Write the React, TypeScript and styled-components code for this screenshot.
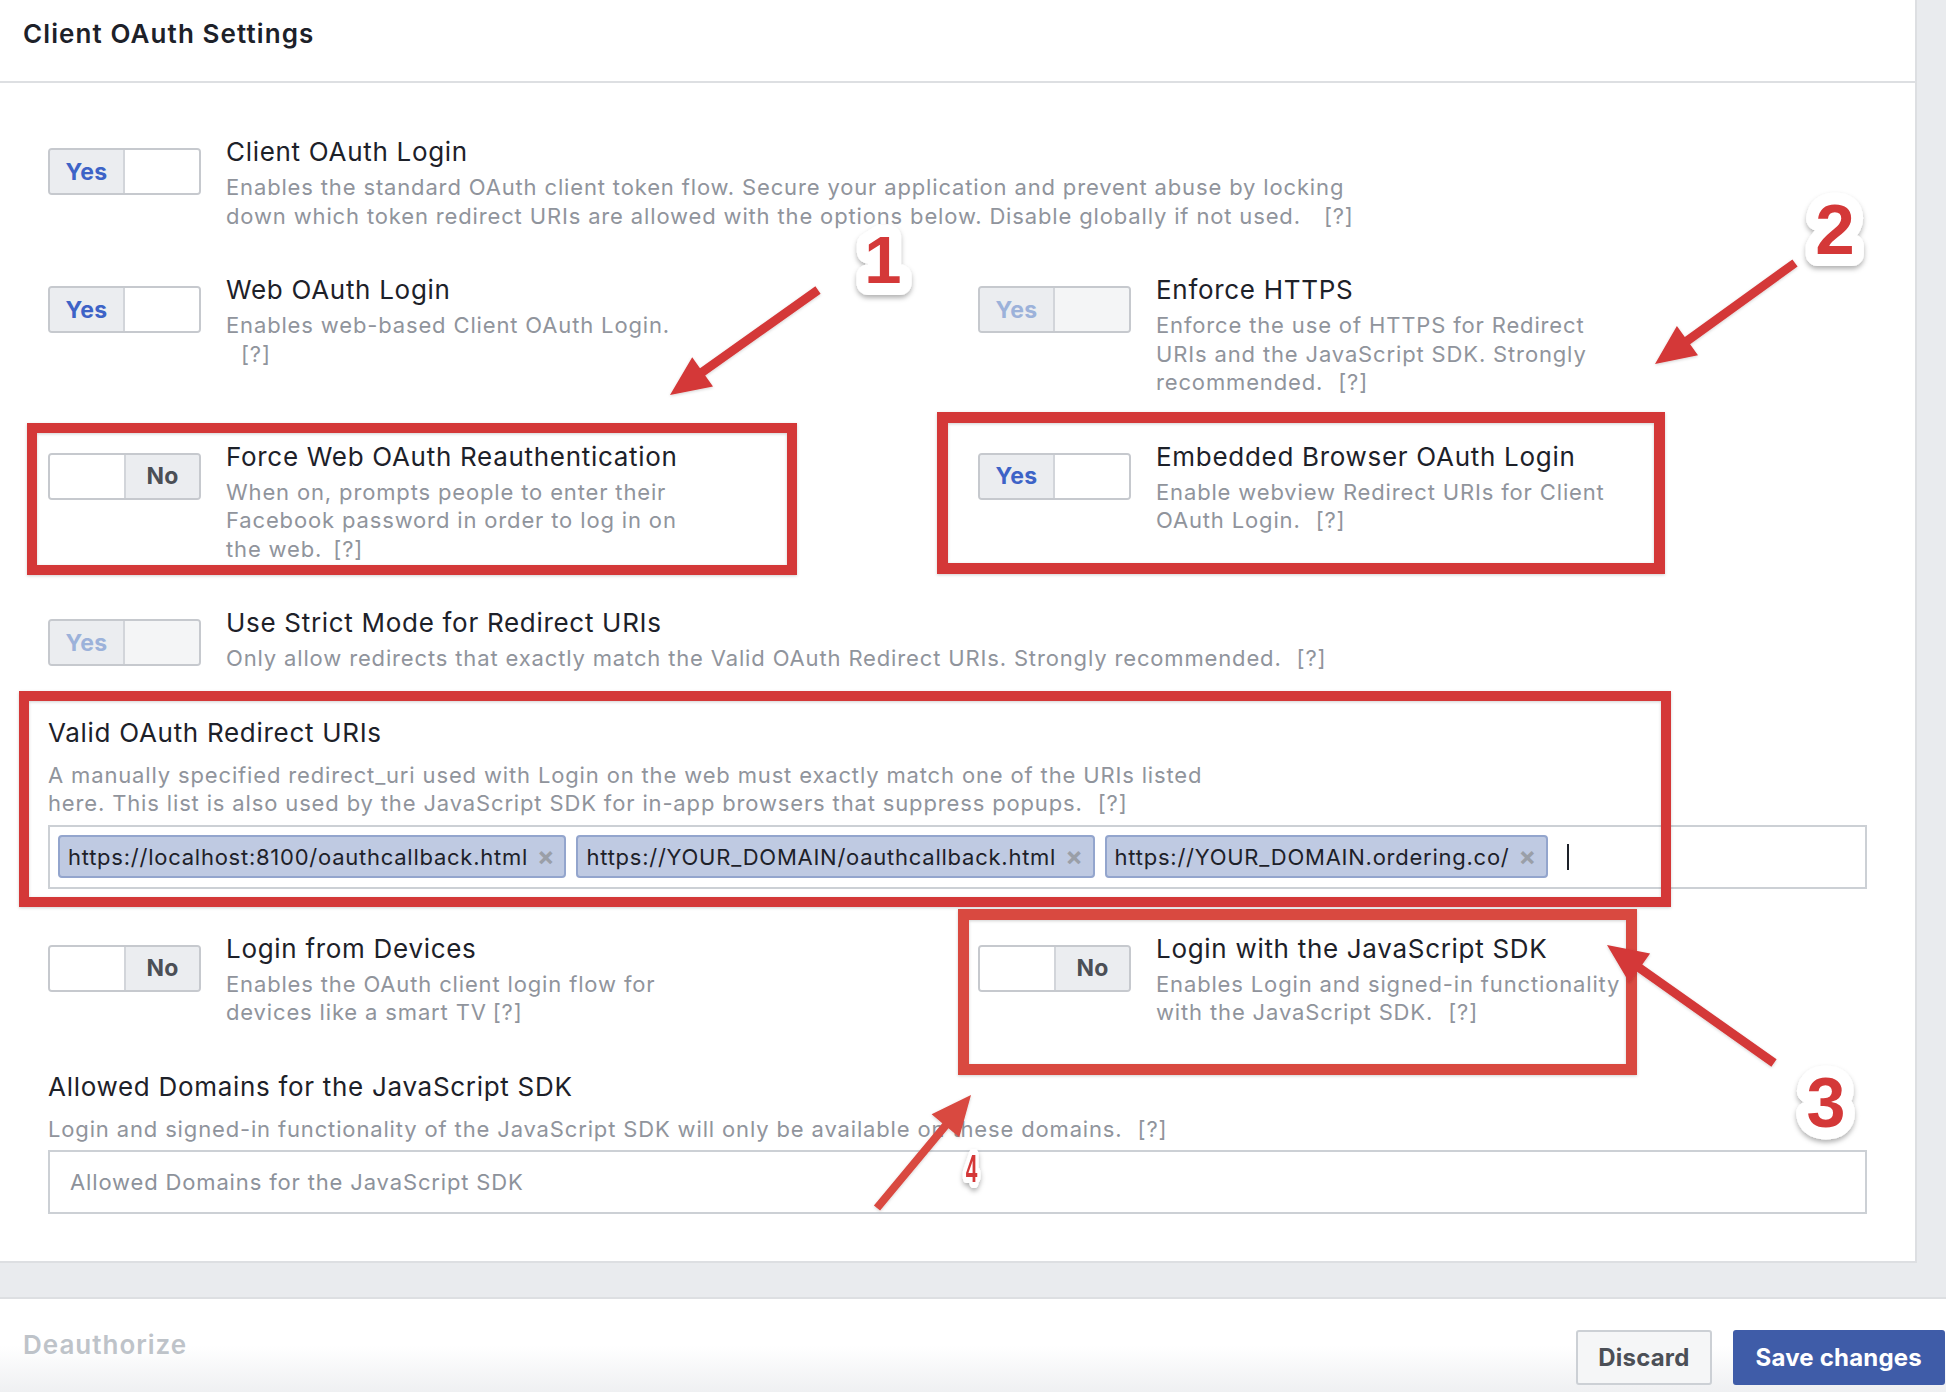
import React from 'react';
import styled, { createGlobalStyle } from 'styled-components';

const GlobalStyle = createGlobalStyle`
  html, body { margin: 0; padding: 0; }
  body {
    background: #e9ebee;
    font-family: Inter, "Noto Sans", "Liberation Sans", sans-serif;
    letter-spacing: 0.8px;
    -webkit-font-smoothing: antialiased;
  }
  * { box-sizing: border-box; }
`;

const Page = styled.div`
  position: relative;
  width: 1946px;
  height: 1392px;
  overflow: hidden;
  display: flex;
  flex-direction: column;
  background: #e9ebee;
`;

const Panel = styled.section`
  width: 1917px;
  background: #fff;
  border-right: 2px solid #dddfe2;
  border-bottom: 2px solid #dddfe2;
`;

const Header = styled.header`
  height: 83px;
  padding: 18px 23px 0;
  border-bottom: 2px solid #dddfe2;
`;

const HeaderTitle = styled.h2`
  margin: 0;
  font-size: 26px;
  line-height: 32px;
  font-weight: 600;
  letter-spacing: 1.1px;
  color: #1d2129;
`;

const Content = styled.div`
  padding: 53px 48px 47px;
  display: flex;
  flex-direction: column;
  gap: 44px;
`;

const TwoCol = styled.div`
  display: grid;
  grid-template-columns: 930px 1fr;
  row-gap: 44px;
`;

const SettingRow = styled.div`
  display: flex;
  align-items: flex-start;
  gap: 25px;
`;

const TextBlock = styled.div`
  display: flex;
  flex-direction: column;
`;

const SettingTitle = styled.div`
  font-size: 26px;
  line-height: 32px;
  letter-spacing: 0.7px;
  color: #1d2129;
`;

const SettingDesc = styled.div<{ $width?: number }>`
  margin-top: 5px;
  font-size: 22px;
  line-height: 28.5px;
  letter-spacing: 0.85px;
  color: #90949c;
  max-width: ${(p) => p.$width ?? 476}px;
`;

const Help = styled.span<{ $gap?: number }>`
  margin-left: ${(p) => p.$gap ?? 15}px;
`;

const ToggleBox = styled.div`
  flex: none;
  margin-top: 12px;
  width: 153px;
  height: 47px;
  display: flex;
  border: 2px solid #c6c9ce;
  border-radius: 4px;
  overflow: hidden;
  background: #ebedf0;
`;

const ToggleLabel = styled.div<{ $on: boolean; $disabled?: boolean }>`
  flex: 1;
  display: flex;
  align-items: center;
  justify-content: center;
  font-size: 23px;
  font-weight: 700;
  letter-spacing: 0.3px;
  color: ${(p) => (p.$on ? (p.$disabled ? '#9cb2da' : '#3d63c7') : '#4b4f56')};
  background: #ebedf0;
`;

const ToggleKnob = styled.div<{ $on: boolean; $disabled?: boolean }>`
  flex: none;
  width: 76px;
  background: ${(p) => (p.$disabled ? '#f4f5f6' : '#ffffff')};
  border-left: ${(p) => (p.$on ? '2px solid #d2d5da' : 'none')};
  border-right: ${(p) => (p.$on ? 'none' : '2px solid #d2d5da')};
`;

const Toggle: React.FC<{ on: boolean; disabled?: boolean }> = ({ on, disabled }) => (
  <ToggleBox>
    {on ? (
      <>
        <ToggleLabel $on $disabled={disabled}>Yes</ToggleLabel>
        <ToggleKnob $on $disabled={disabled} />
      </>
    ) : (
      <>
        <ToggleKnob $on={false} $disabled={disabled} />
        <ToggleLabel $on={false}>No</ToggleLabel>
      </>
    )}
  </ToggleBox>
);

const Setting: React.FC<{
  on: boolean;
  disabled?: boolean;
  title: string;
  desc: string;
  width?: number;
  helpGap?: number;
}> = ({ on, disabled, title, desc, width, helpGap }) => (
  <SettingRow>
    <Toggle on={on} disabled={disabled} />
    <TextBlock>
      <SettingTitle>{title}</SettingTitle>
      <SettingDesc $width={width}>
        {desc}
        <wbr />
        <Help $gap={helpGap}>[?]</Help>
      </SettingDesc>
    </TextBlock>
  </SettingRow>
);

const Field = styled.div`
  display: flex;
  flex-direction: column;
`;

const FieldLabel = styled.div`
  font-size: 26px;
  line-height: 32px;
  letter-spacing: 0.7px;
  color: #1d2129;
`;

const FieldDesc = styled.div<{ $width?: number }>`
  margin-top: 12px;
  font-size: 22px;
  line-height: 28.5px;
  letter-spacing: 0.85px;
  color: #90949c;
  max-width: ${(p) => p.$width ?? 1200}px;
`;

const TokenInput = styled.div`
  margin-top: 7px;
  height: 64px;
  border: 2px solid #ccd0d5;
  padding: 0 8px;
  display: flex;
  align-items: center;
  gap: 10px;
  background: #fff;
`;

const Token = styled.div`
  height: 43px;
  display: flex;
  align-items: center;
  padding: 0 9px 0 8px;
  background: #bfcae2;
  border: 2px solid #93a5cd;
  border-radius: 4px;
  font-size: 22px;
  letter-spacing: 0.75px;
  color: #1d2129;
  white-space: nowrap;
`;

const TokenClose = styled.span`
  margin-left: 9px;
  font-size: 26px;
  font-weight: 700;
  color: #9a9fa8;
  line-height: 1;
`;

const Caret = styled.span`
  margin-left: 9px;
  width: 2px;
  height: 26px;
  background: #1d2129;
`;

const TextInput = styled.input`
  margin-top: 7px;
  height: 64px;
  border: 2px solid #ccd0d5;
  padding: 0 20px;
  font-family: inherit;
  font-size: 22px;
  letter-spacing: 0.85px;
  color: #1d2129;
  outline: none;
  &::placeholder {
    color: #8d929b;
  }
`;

const Footer = styled.footer`
  margin-top: auto;
  height: 95px;
  border-top: 2px solid #dddfe2;
  background: linear-gradient(#ffffff 50%, #eff0f2);
  display: flex;
  align-items: flex-start;
  justify-content: space-between;
  padding: 0 1px 0 23px;
`;

const FooterLink = styled.div`
  margin-top: 30px;
  font-size: 26px;
  line-height: 32px;
  font-weight: 600;
  letter-spacing: 1px;
  color: #bec3c9;
`;

const ButtonGroup = styled.div`
  margin-top: 31px;
  display: flex;
  gap: 21px;
`;

const Button = styled.button<{ $primary?: boolean }>`
  height: 55px;
  padding: 0 ${(p) => (p.$primary ? 21 : 20)}px;
  border-radius: 3px;
  font-family: inherit;
  font-size: 24px;
  font-weight: 700;
  letter-spacing: 0.2px;
  border: 2px solid ${(p) => (p.$primary ? '#3f5ca8' : '#ccd0d5')};
  background: ${(p) => (p.$primary ? '#3f5ca8' : '#f5f6f7')};
  color: ${(p) => (p.$primary ? '#ffffff' : '#4b4f56')};
`;

const Overlay = styled.svg`
  position: absolute;
  left: 0;
  top: 0;
  pointer-events: none;
`;

type Pt = [number, number];

const arrowPoints = (tail: Pt, tip: Pt, headLen = 40, half = 18, shaft = 4.5) => {
  const dx = tip[0] - tail[0];
  const dy = tip[1] - tail[1];
  const len = Math.hypot(dx, dy);
  const ux = dx / len;
  const uy = dy / len;
  const px = -uy;
  const py = ux;
  const bx = tip[0] - ux * headLen;
  const by = tip[1] - uy * headLen;
  const pts: Pt[] = [
    [tail[0] + px * shaft, tail[1] + py * shaft],
    [bx + px * shaft, by + py * shaft],
    [bx + px * half, by + py * half],
    tip,
    [bx - px * half, by - py * half],
    [bx - px * shaft, by - py * shaft],
    [tail[0] - px * shaft, tail[1] - py * shaft],
  ];
  return pts.map((p) => `${p[0].toFixed(1)},${p[1].toFixed(1)}`).join(' ');
};

const RED = '#d43838';

const Annotations: React.FC = () => (
  <Overlay width={1946} height={1392} viewBox="0 0 1946 1392">
    <defs>
      <filter id="shadow" x="-20%" y="-20%" width="140%" height="140%">
        <feDropShadow dx="0" dy="3" stdDeviation="2.5" floodColor="#000" floodOpacity="0.3" />
      </filter>
      <filter id="boxshadow" x="-5%" y="-5%" width="110%" height="110%">
        <feDropShadow dx="0" dy="1" stdDeviation="1.5" floodColor="#000" floodOpacity="0.18" />
      </filter>
    </defs>
    <g fill="none" filter="url(#boxshadow)">
      <rect x={32} y={428} width={760} height={142} stroke={RED} strokeWidth={10} />
      <rect x={942.5} y={417.5} width={717} height={151} stroke={RED} strokeWidth={11} />
      <rect x={24} y={696} width={1642} height={206} stroke={RED} strokeWidth={10} />
      <rect x={963.5} y={914.5} width={668} height={155} stroke="#d94840" strokeWidth={11} />
    </g>
    <g filter="url(#boxshadow)">
      <polygon points={arrowPoints([818, 290], [670, 395])} fill={RED} />
      <polygon points={arrowPoints([1795, 263], [1655, 364])} fill={RED} />
      <polygon points={arrowPoints([1774, 1063], [1607, 945])} fill={RED} />
      <polygon points={arrowPoints([877, 1208], [971, 1095], 40, 18, 4)} fill="#d94840" />
    </g>
    <g
      filter="url(#shadow)"
      fontFamily='"Liberation Sans", Arial, sans-serif'
      fontWeight={700}
      textAnchor="middle"
      fill={RED}
      stroke="#ffffff"
      strokeLinejoin="round"
      paintOrder="stroke"
      letterSpacing={0}
    >
      <text x={883} y={283} fontSize={67} strokeWidth={24}>1</text>
      <text x={1835} y={254} fontSize={71} strokeWidth={24}>2</text>
      <text x={1826} y={1127} fontSize={70} strokeWidth={24}>3</text>
      <text transform="translate(971.5 1182) scale(0.55 1)" fontSize={38} strokeWidth={12}>4</text>
    </g>
  </Overlay>
);

export default function App() {
  return (
    <>
      <GlobalStyle />
      <Page>
        <Panel>
          <Header>
            <HeaderTitle>Client OAuth Settings</HeaderTitle>
          </Header>
          <Content>
            <Setting
              on
              title="Client OAuth Login"
              desc="Enables the standard OAuth client token flow. Secure your application and prevent abuse by locking down which token redirect URIs are allowed with the options below. Disable globally if not used."
              width={1170}
              helpGap={23}
            />
            <TwoCol>
              <Setting on title="Web OAuth Login" desc="Enables web-based Client OAuth Login." />
              <Setting
                on
                disabled
                title="Enforce HTTPS"
                desc="Enforce the use of HTTPS for Redirect URIs and the JavaScript SDK. Strongly recommended."
              />
              <Setting
                on={false}
                title="Force Web OAuth Reauthentication"
                desc="When on, prompts people to enter their Facebook password in order to log in on the web."
                helpGap={11}
              />
              <Setting
                on
                title="Embedded Browser OAuth Login"
                desc="Enable webview Redirect URIs for Client OAuth Login."
              />
            </TwoCol>
            <Setting
              on
              disabled
              title="Use Strict Mode for Redirect URIs"
              desc="Only allow redirects that exactly match the Valid OAuth Redirect URIs. Strongly recommended."
              width={1400}
            />
            <Field>
              <FieldLabel>Valid OAuth Redirect URIs</FieldLabel>
              <FieldDesc $width={1200}>
                A manually specified redirect_uri used with Login on the web must exactly match one of the URIs listed here. This list is also used by the JavaScript SDK for in-app browsers that suppress popups.
                <wbr />
                <Help>[?]</Help>
              </FieldDesc>
              <TokenInput>
                <Token>
                  https://localhost:8100/oauthcallback.html<TokenClose>×</TokenClose>
                </Token>
                <Token>
                  https://YOUR_DOMAIN/oauthcallback.html<TokenClose>×</TokenClose>
                </Token>
                <Token>
                  https://YOUR_DOMAIN.ordering.co/<TokenClose>×</TokenClose>
                </Token>
                <Caret />
              </TokenInput>
            </Field>
            <TwoCol>
              <Setting
                on={false}
                title="Login from Devices"
                desc="Enables the OAuth client login flow for devices like a smart TV"
                helpGap={6}
              />
              <Setting
                on={false}
                title="Login with the JavaScript SDK"
                desc="Enables Login and signed-in functionality with the JavaScript SDK."
              />
            </TwoCol>
            <Field>
              <FieldLabel>Allowed Domains for the JavaScript SDK</FieldLabel>
              <FieldDesc $width={1400}>
                Login and signed-in functionality of the JavaScript SDK will only be available on these domains.
                <wbr />
                <Help>[?]</Help>
              </FieldDesc>
              <TextInput placeholder="Allowed Domains for the JavaScript SDK" />
            </Field>
          </Content>
        </Panel>
        <Footer>
          <FooterLink>Deauthorize</FooterLink>
          <ButtonGroup>
            <Button>Discard</Button>
            <Button $primary>Save changes</Button>
          </ButtonGroup>
        </Footer>
        <Annotations />
      </Page>
    </>
  );
}
